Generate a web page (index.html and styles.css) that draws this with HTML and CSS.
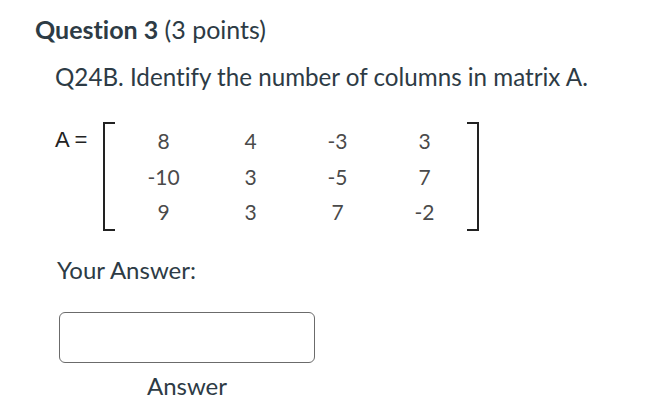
FILE: index.html
```html
<!DOCTYPE html>
<html>
<head>
<meta charset="utf-8">
<link rel="stylesheet" href="styles.css">
</head>
<body>
<div class="page">
  <h2 class="title"><strong>Question 3</strong> <span class="pts">(3 points)</span></h2>
  <div class="body">
    <p class="prompt">Q24B. Identify the number of columns in matrix A.</p>
    <div class="eq">
      <span class="lhs">A =</span>
      <div class="matrix">
        <div class="grid">
          <span>8</span><span>4</span><span>-3</span><span>3</span>
          <span>-10</span><span>3</span><span>-5</span><span>7</span>
          <span>9</span><span>3</span><span>7</span><span>-2</span>
        </div>
      </div>
    </div>
    <p class="your">Your Answer:</p>
    <div class="answer">
      <div class="box"></div>
      <div class="label">Answer</div>
    </div>
  </div>
</div>
</body>
</html>
```
FILE: styles.css
```css
html, body { margin: 0; padding: 0; background: #fff; }
body { font-family: Lato, "Open Sans", sans-serif; color: #2d3b45; font-variant-ligatures: none; }
.page { padding: 13px 0 0 35px; }
.title { margin: 0; font-size: 25px; font-weight: 400; color: #2d3b45; line-height: 32px; }
.title strong { font-weight: 700; }
.body { padding-left: 20px; }
.prompt { margin: 17px 0 0 0; font-size: 24.2px; line-height: 30px; }
.eq { display: flex; align-items: flex-start; margin-top: 30px; }
.lhs { font-family: "Liberation Sans", Arial, sans-serif; font-size: 22px; color: #222; margin-top: 6px; line-height: 24px; width: 48px; }
.matrix { border-left: 2px solid #222; border-right: 2px solid #222; position: relative; padding: 7px 0; width: 372px; }
.matrix::before, .matrix::after { content: ""; position: absolute; top: 0; bottom: 0; width: 10px; border-top: 2px solid #222; border-bottom: 2px solid #222; }
.matrix::before { left: 0; }
.matrix::after { right: 0; }
.grid { display: grid; grid-template-columns: 87px 87px 87px 87px; padding-left: 15px; row-gap: 11.5px; }
.grid span { text-align: center; font-size: 21px; color: #4a4a4a; line-height: 24px; }
.your { margin: 25px 0 0 2px; font-size: 24px; line-height: 28px; }
.answer { width: 256px; margin: 28px 0 0 4px; }
.box { height: 51px; border: 1px solid #6b6b6b; border-radius: 6px; box-sizing: border-box; background: #fff; }
.label { text-align: center; font-size: 24px; line-height: 28px; margin-top: 9px; }
```
